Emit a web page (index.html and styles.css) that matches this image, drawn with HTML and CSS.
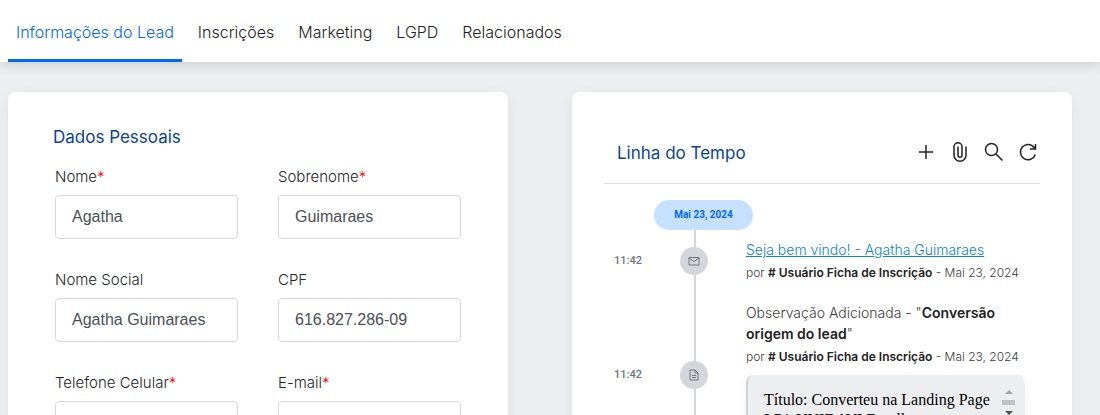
FILE: index.html
```html
<!DOCTYPE html>
<html lang="pt-BR">
  <head>
    <meta charset="UTF-8" />
    <meta name="viewport" content="width=device-width, initial-scale=1.0" />
    <title>Informações do Lead</title>
    <link rel="stylesheet" href="styles.css">
  </head>
  <body>
    <nav class="tabs">
      <a href="#lead" class="tab active">Informações do Lead</a>
      <a href="#inscricoes" class="tab">Inscrições</a>
      <a href="#marketing" class="tab">Marketing</a>
      <a href="#lgpd" class="tab">LGPD</a>
      <a href="#relacionados" class="tab">Relacionados</a>
    </nav>

    <main class="columns">
      <!-- personal data -->
      <section class="card personal">
        <h2 class="card-title">Dados Pessoais</h2>
        <form class="fields">
          <div class="field">
            <label for="nome">Nome<span class="required">*</span></label>
            <input id="nome" type="text" value="Agatha" />
          </div>
          <div class="field">
            <label for="sobrenome">Sobrenome<span class="required">*</span></label>
            <input id="sobrenome" type="text" value="Guimaraes" />
          </div>
          <div class="field">
            <label for="social">Nome Social</label>
            <input id="social" type="text" value="Agatha Guimaraes" />
          </div>
          <div class="field">
            <label for="cpf">CPF</label>
            <input id="cpf" type="text" value="616.827.286-09" />
          </div>
          <div class="field">
            <label for="celular">Telefone Celular<span class="required">*</span></label>
            <input id="celular" type="tel" />
          </div>
          <div class="field">
            <label for="email">E-mail<span class="required">*</span></label>
            <input id="email" type="email" />
          </div>
        </form>
      </section>

      <!-- timeline -->
      <section class="card history">
        <header class="history-header">
          <h2 class="card-title">Linha do Tempo</h2>
          <div class="actions">
            <button type="button" aria-label="Adicionar">
              <svg viewBox="0 0 20 20"><path d="M10 3v14M3 10h14" /></svg>
            </button>
            <button type="button" aria-label="Anexar">
              <svg viewBox="0 0 20 20"><path d="M16 4.500v8.700a6 6 0 0 1-12 0V4.800a4 4 0 0 1 8 0v8.500a2 2 0 0 1-4 0V4.500" /></svg>
            </button>
            <button type="button" aria-label="Pesquisar">
              <svg viewBox="0 0 20 20"><circle cx="7.500" cy="7.500" r="6" /><path d="M12 12l6.500 6.500" /></svg>
            </button>
            <button type="button" aria-label="Atualizar">
              <svg viewBox="0 0 20 20"><path d="M17.300 12.500A7.600 7.600 0 1 1 16.500 6M17.500 2v5h-5.500" /></svg>
            </button>
          </div>
        </header>

        <div class="timeline">
          <time class="date" datetime="2024-05-23">Mai 23, 2024</time>

          <article class="entry">
            <time class="hour">11:42</time>
            <span class="marker">
              <svg viewBox="0 0 12 12"><path d="M1 2.500h10v7.500H1zM1 3l5 3.500L11 3" /></svg>
            </span>
            <div class="entry-body">
              <a href="#mensagem" class="subject">Seja bem vindo! - Agatha Guimaraes</a>
              <p class="byline">por <b># Usuário Ficha de Inscrição</b> - Mai 23, 2024</p>
            </div>
          </article>

          <article class="entry">
            <time class="hour">11:42</time>
            <span class="marker">
              <svg viewBox="0 0 12 12"><path d="M2 1h5l3 3v7H2zM7 1v3h3M4 6.500h4M4 8.500h4" /></svg>
            </span>
            <div class="entry-body">
              <p class="subject">Observação Adicionada - "<b>Conversão origem do lead</b>"</p>
              <p class="byline">por <b># Usuário Ficha de Inscrição</b> - Mai 23, 2024</p>
              <div class="note">
                <p class="note-text">Título: Converteu na Landing Page LP1-UNIDAVI Detalhes</p>
                <div class="scroller" aria-hidden="true">
                  <svg viewBox="0 0 8 4"><path d="M0 4l4-4 4 4z" /></svg>
                  <span class="thumb"></span>
                  <svg class="down" viewBox="0 0 8 4"><path d="M0 0l4 4 4-4z" /></svg>
                </div>
              </div>
            </div>
          </article>
        </div>
      </section>
    </main>
  </body>
</html>
```
FILE: styles.css
```css
* {
  box-sizing: border-box;
}

body {
  margin: 0;
  height: 100vh;
  overflow: hidden;
  background-color: #edeef0;
  color: #212529;
  font: 300 16px/24px Inter, sans-serif;
}

h2,
p {
  margin: 0;
}

b {
  color: #212121;
  font-weight: 600;
}

.tabs {
  display: flex;
  gap: 8px;
  height: 62px;
  padding: 0 8px;
  background-color: #fff;
  box-shadow: 0 1px 12px rgba(0, 0, 0, 0.18);
}

.tab {
  padding: 20px 8px 15px;
  border-bottom: 3px solid transparent;
  color: #212121;
  text-decoration: none;
  white-space: nowrap;
}

.tab.active {
  border-color: #0068fa;
  color: #0068fa;
}

.columns {
  display: grid;
  grid-template-columns: 1fr 1fr;
  gap: 64px;
  padding: 30px 28px 30px 8px;
}

.card {
  background-color: #fff;
  border-radius: 8px;
  box-shadow: 0 4px 16px rgba(0, 0, 0, 0.06);
}

.card-title {
  color: #07439b;
  font-size: 17px;
  font-weight: 400;
  line-height: 24px;
}

.personal {
  padding: 33px 45px;
}

.fields {
  display: grid;
  grid-template-columns: 1fr 1fr;
  gap: 29px 40px;
  padding: 16px 2px;
}

.field {
  display: flex;
  flex-direction: column;
  gap: 6px;
}

.field label {
  font-size: 15px;
}

.required {
  color: #f00;
}

.field input {
  width: 100%;
  height: 44px;
  padding: 0 16px;
  border: 1px solid #d8d8d8;
  border-radius: 4px;
  background-color: #fff;
  color: #495057;
  font: 16px "Liberation Sans", sans-serif;
}

.history {
  padding: 32px;
}

.history-header {
  display: flex;
  align-items: center;
  justify-content: space-between;
  height: 60px;
  padding: 0 2px 1px 13px;
  border-bottom: 1px solid #e0e0e0;
}

.actions {
  display: flex;
  gap: 14px;
  padding-bottom: 2px;
}

.actions button {
  width: 20px;
  height: 20px;
  padding: 0;
  border: 0;
  background: none;
}

svg {
  display: block;
  fill: none;
  stroke: #212121;
  stroke-width: 1.5;
}

.timeline {
  position: relative;
  padding: 16px 15px 0 0;
}

/* the rail behind the date and the markers */
.timeline::before {
  content: "";
  position: absolute;
  top: 16px;
  bottom: 0;
  left: 90px;
  width: 2px;
  background-color: #d5d6dc;
}

.date {
  position: relative;
  display: block;
  width: 99px;
  margin-left: 50px;
  border-radius: 16px;
  background-color: #c5e1ff;
  color: #0068fa;
  font: 700 10px/30px Roboto, sans-serif;
  text-align: center;
}

.entry {
  display: grid;
  grid-template-columns: 66px 28px 1fr;
  align-items: center;
  padding: 9px 0 10px 10px;
}

.hour {
  color: #6c757d;
  font: 500 11px/20px Roboto, sans-serif;
}

.marker {
  position: relative;
  display: grid;
  place-items: center;
  width: 28px;
  height: 28px;
  border-radius: 50%;
  background-color: #d5d6dc;
}

.marker svg {
  width: 12px;
  height: 12px;
  stroke: #777;
  stroke-width: 1;
}

.entry-body {
  padding-left: 38px;
  color: #3c3c3c;
}

.subject {
  display: block;
  font-size: 14px;
  line-height: 21px;
}

a.subject {
  color: #0b82d8;
}

.byline {
  padding-top: 3px;
  font-size: 12px;
  line-height: 20px;
  white-space: nowrap;
}

.note {
  display: flex;
  justify-content: space-between;
  height: 73px;
  margin-top: 8px;
  padding: 15px 10px 15px 16px;
  border-left: 2px solid #d0d2d6;
  border-radius: 8px;
  background-color: #edeef0;
  box-shadow: 0 4px 12px rgba(0, 0, 0, 0.06);
}

.note-text {
  overflow: hidden;
  color: #000;
  font: 16px/20px "Liberation Serif", serif;
}

.scroller {
  display: flex;
  flex-direction: column;
  align-items: center;
  gap: 6px;
  width: 13px;
}

.scroller svg {
  width: 8px;
  height: 4px;
  fill: #a3a3a3;
  stroke: none;
}

.scroller .down {
  fill: #505050;
}

.thumb {
  width: 13px;
  height: 5px;
  background-color: #c1c1c1;
}
```
